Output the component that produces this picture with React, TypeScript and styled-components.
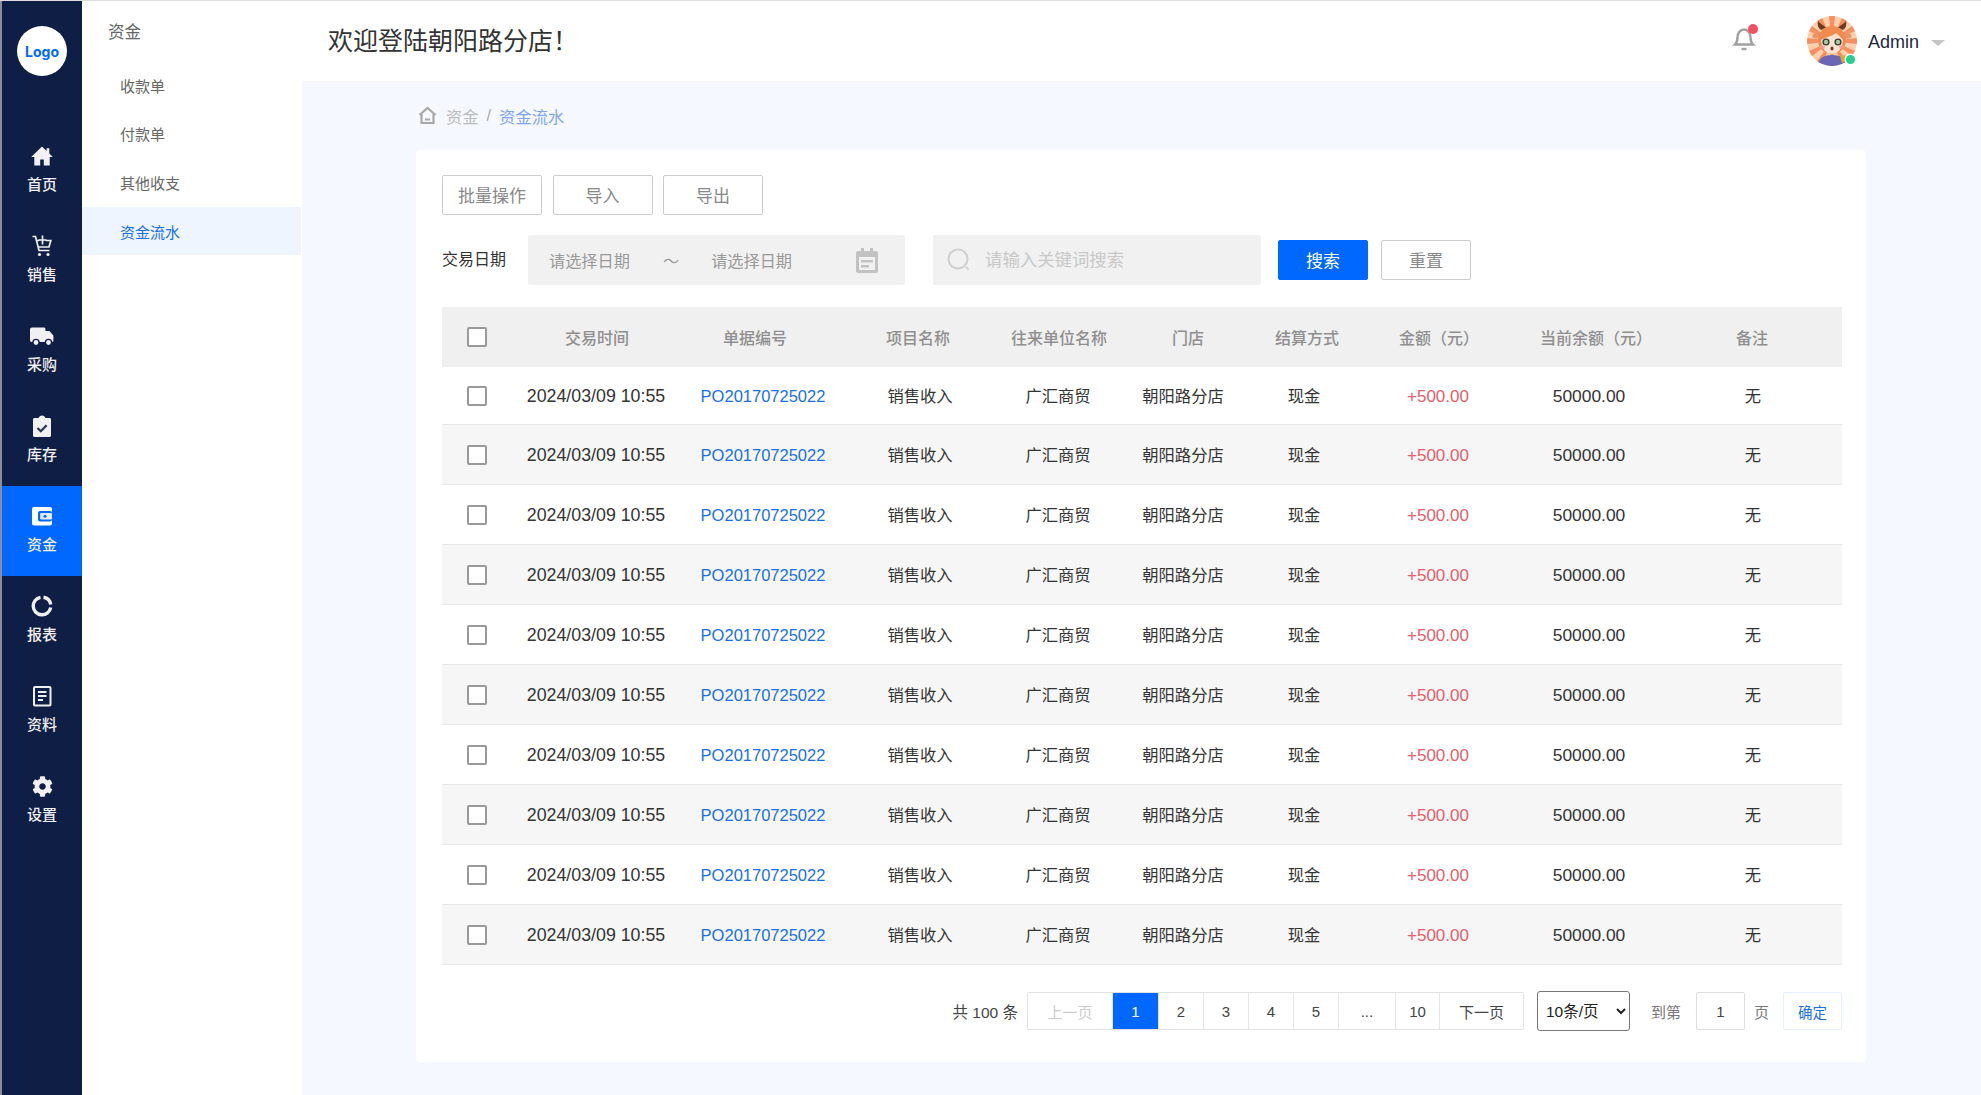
import React from 'react';
import styled, { createGlobalStyle } from 'styled-components';
import { FaCog } from 'react-icons/fa';

const FONT = '"Liberation Sans", "Noto Sans CJK SC", sans-serif';
const HEAD_COLS = '70px 170px 146px 180px 102px 156px 82px 182px 132px 180px';
const BODY_COLS = '70px 168px 166px 148px 128px 122px 120px 148px 154px 174px';

const GlobalStyle = createGlobalStyle`
  html, body {
    margin: 0;
    padding: 0;
    background: #f6f8ff;
    font-family: ${FONT};
  }
  * {
    box-sizing: border-box;
  }
`;

const Shell = styled.div`
  display: grid;
  grid-template-columns: 82px 220px 1fr;
  width: 1981px;
  height: 1095px;
  overflow: hidden;
  border-top: 1px solid #dedede;
`;

const Rail = styled.nav`
  display: flex;
  flex-direction: column;
  background: #0f1e45;
  border-left: 2px solid #8b8f9b;
`;

const LogoWrap = styled.div`
  display: flex;
  justify-content: center;
  height: 125px;
  padding-top: 25px;
`;

const Logo = styled.div`
  display: flex;
  align-items: center;
  justify-content: center;
  width: 50px;
  height: 50px;
  border-radius: 50%;
  background: #fff;
  color: #0068ff;
  font-family: Inter, sans-serif;
  font-size: 14px;
  font-weight: 700;
`;

const RailItem = styled.a<{ $active?: boolean }>`
  display: flex;
  flex-direction: column;
  align-items: center;
  height: 90px;
  padding-top: 18px;
  gap: 6px;
  background: ${(p) => (p.$active ? '#0068ff' : 'transparent')};
  color: #f0f0f0;
  font-size: 15px;
  font-weight: 500;
  line-height: 22px;
`;

const RailIcon = styled.svg`
  display: block;
  width: 24px;
  height: 24px;
`;

const SubNav = styled.aside`
  display: flex;
  flex-direction: column;
  background: #fff;
`;

const SubTitle = styled.div`
  height: 60px;
  padding: 20px 0 0 26px;
  color: #666;
  font-size: 16.5px;
  line-height: 22px;
`;

const SubItem = styled.a<{ $active?: boolean }>`
  display: flex;
  align-items: center;
  height: 48.6px;
  padding-left: 38px;
  margin-right: 1px;
  background: ${(p) => (p.$active ? '#eef5ff' : 'transparent')};
  color: ${(p) => (p.$active ? '#1a6fe8' : '#666')};
  font-size: 15px;
`;

const Main = styled.main`
  display: flex;
  flex-direction: column;
  min-width: 0;
`;

const TopBar = styled.header`
  display: flex;
  align-items: center;
  height: 80px;
  padding-left: 26px;
  background: #fff;
`;

const Welcome = styled.h1`
  flex: 1;
  margin: 0 0 4px;
  color: #333;
  font-size: 25px;
  font-weight: 400;
`;

const Bell = styled.div`
  position: relative;
  width: 24px;
  height: 26px;
  margin-right: 51px;
  margin-bottom: 6px;
`;

const BellDot = styled.span`
  position: absolute;
  top: -1px;
  right: -2px;
  width: 10px;
  height: 10px;
  border-radius: 50%;
  background: #f4505f;
`;

const AvatarWrap = styled.div`
  position: relative;
  width: 50px;
  height: 50px;
  margin-right: 11px;
`;

const StatusDot = styled.span`
  position: absolute;
  right: 2px;
  bottom: 2px;
  width: 9px;
  height: 9px;
  border-radius: 50%;
  background: #22cf8b;
  box-shadow: 0 0 0 1.5px #fff;
`;

const UserName = styled.span`
  margin-top: 2px;
  color: #1d2740;
  font-size: 18px;
`;

const Caret = styled.span`
  width: 0;
  height: 0;
  margin: 3px 36px 0 12px;
  border-left: 7px solid transparent;
  border-right: 7px solid transparent;
  border-top: 6px solid #c4c4c4;
`;

const Content = styled.div`
  display: flex;
  flex-direction: column;
  padding: 0 115px 0 114px;
`;

const Crumbs = styled.div`
  display: flex;
  align-items: center;
  height: 69px;
  padding-left: 2px;
  color: #bbb;
  font-size: 16.3px;
`;

const CrumbHome = styled.svg`
  width: 19px;
  height: 19px;
  margin-right: 9px;
`;

const CrumbSep = styled.span`
  margin: 0 8px;
  color: #aaa;
`;

const CrumbCurrent = styled.span`
  color: #7ea6ee;
`;

const Card = styled.section`
  height: 912px;
  padding: 25px 24px 0 26px;
  background: #fff;
  border-radius: 4px;
`;

const Toolbar = styled.div`
  display: flex;
  gap: 10.5px;
  margin-bottom: 20px;
`;

const Button = styled.button<{ $primary?: boolean; $w?: number }>`
  width: ${(p) => p.$w ?? 100}px;
  height: 40px;
  padding: 0 0 2px;
  border: 1px solid ${(p) => (p.$primary ? '#0068ff' : '#ccc')};
  border-radius: 2px;
  background: ${(p) => (p.$primary ? '#0068ff' : '#fff')};
  color: ${(p) => (p.$primary ? '#fff' : '#888')};
  font-family: ${FONT};
  font-size: 17px;
`;

const FilterRow = styled.div`
  display: flex;
  align-items: center;
  height: 50px;
  margin-bottom: 22px;
`;

const FilterLabel = styled.label`
  width: 86px;
  margin-bottom: 4px;
  color: #333;
  font-size: 16px;
`;

const DateRange = styled.div`
  display: flex;
  align-items: center;
  width: 377px;
  height: 50px;
  padding: 0 27px 0 21px;
  background: #f1f1f1;
  border-radius: 2px;
  color: #999;
  font-size: 16.2px;
`;

const Tilde = styled.span`
  margin: 0 32px 0 33px;
`;

const DateText = styled.span`
  flex: none;
  padding-bottom: 1px;
`;

const CalendarIcon = styled.svg`
  width: 22px;
  height: 25px;
  margin-left: auto;
`;

const SearchBox = styled.div`
  display: flex;
  align-items: center;
  width: 328px;
  height: 50px;
  margin-left: 28px;
  margin-right: 17px;
  padding-left: 14px;
  background: #f1f1f1;
  border-radius: 2px;
  color: #c8c8c8;
  font-size: 17.4px;
`;

const SearchIcon = styled.svg`
  width: 24px;
  height: 24px;
  margin-right: 14px;
`;

const Placeholder = styled.span`
  padding-bottom: 3px;
`;

const ResetButton = styled(Button)`
  margin-left: 13px;
`;

const HeadRow = styled.div`
  display: grid;
  grid-template-columns: ${HEAD_COLS};
  align-items: center;
  height: 60px;
  background: #f0f0f0;
  color: #8f8f8f;
  font-size: 16px;
  font-weight: 500;
  text-align: center;
`;

const Row = styled.div<{ $striped: boolean; $first: boolean }>`
  display: grid;
  grid-template-columns: ${BODY_COLS};
  align-items: center;
  height: ${(p) => (p.$first ? 58 : 60)}px;
  background: ${(p) => (p.$striped ? '#f6f6f6' : '#fff')};
  border-bottom: 1px solid #e8e8e8;
  color: #333;
  font-size: 16.3px;
  text-align: center;
`;

const Cell = styled.span`
  padding-bottom: 2px;
`;

const NumberCell = styled.span`
  padding-top: 2px;
`;

const Check = styled.input`
  appearance: none;
  display: block;
  width: 20px;
  height: 20px;
  margin: 0 auto;
  border: 2.5px solid #999;
  border-radius: 2px;
  background: #fff;
`;

const DateCell = styled(NumberCell)`
  font-size: 17.8px;
`;

const OrderLink = styled(NumberCell)`
  color: #1a6fe8;
  font-size: 16.5px;
`;

const Amount = styled(NumberCell)`
  color: #e4606a;
  font-size: 17px;
`;

const Balance = styled(NumberCell)`
  font-size: 17.4px;
`;

const Pager = styled.div`
  display: flex;
  align-items: center;
  justify-content: flex-end;
  height: 40px;
  margin-top: 26px;
  color: #555;
  font-size: 15px;
`;

const Total = styled.span`
  margin-right: 9px;
  color: #444;
  font-size: 15.5px;
`;

const PageGroup = styled.div`
  display: flex;
  height: 38px;
  border: 1px solid #e2e2e2;
  border-radius: 2px;
`;

const PageItem = styled.a<{ $w: number; $active?: boolean; $disabled?: boolean }>`
  display: flex;
  align-items: center;
  justify-content: center;
  width: ${(p) => p.$w}px;
  background: ${(p) => (p.$active ? '#0068ff' : '#fff')};
  color: ${(p) => (p.$active ? '#fff' : p.$disabled ? '#ccc' : '#444')};
  font-size: 15px;
  & + & {
    border-left: 1px solid #e6e6e6;
  }
`;

const SizeSelect = styled.select`
  width: 93px;
  height: 40px;
  margin-left: 13px;
  padding-left: 4px;
  border: 1px solid #767676;
  border-radius: 3px;
  background: #fff;
  color: #222;
  font-family: ${FONT};
  font-size: 15.5px;
`;

const JumpLabel = styled.span`
  margin: 0 15px 0 21px;
  color: #777;
`;

const JumpInput = styled.div`
  display: flex;
  align-items: center;
  justify-content: center;
  width: 49px;
  height: 38px;
  border: 1px solid #ddd;
  border-radius: 2px;
  color: #444;
`;

const JumpSuffix = styled.span`
  margin: 0 14px 0 9px;
  color: #777;
`;

const ConfirmButton = styled.a`
  display: flex;
  align-items: center;
  justify-content: center;
  width: 59px;
  height: 38px;
  border: 1px solid #e6f0ff;
  border-radius: 2px;
  color: #1a6fe8;
  font-size: 14.5px;
`;

const railItems: { label: string; icon: React.ReactNode }[] = [
  {
    label: '首页',
    icon: (
      <RailIcon viewBox="0 0 24 24" fill="#f0f0f0">
        <path d="M12 2.5 1.2 13h3.1v8.5h5.9v-6h3.6v6h5.9V13h3.1l-3.5-3.4V4.2h-2.7v2.8z" />
      </RailIcon>
    ),
  },
  {
    label: '销售',
    icon: (
      <RailIcon viewBox="0 0 24 24" fill="none" stroke="#f0f0f0" strokeWidth="1.7">
        <path d="M2.5 2.500h3l3.500 14h10.500" />
        <path d="M6.500 6.500h2.800M15.500 6.500h5.300l-1.800 6.500H8.200" />
        <path d="M12.500 1.500v9M8.500 6h8" />
        <circle cx="9.500" cy="20.500" r="1.600" fill="#f0f0f0" stroke="none" />
        <circle cx="18" cy="20.500" r="1.600" fill="#f0f0f0" stroke="none" />
      </RailIcon>
    ),
  },
  {
    label: '采购',
    icon: (
      <RailIcon viewBox="0 0 24 24" fill="#f0f0f0">
        <path d="M0 5.500C0 4.400.9 3.500 2 3.500h12c.8 0 1.400.6 1.400 1.400V7h4l4 4.600v5.200c0 .7-.5 1.200-1.200 1.200H1.800C.8 18 0 17.200 0 16.200z" />
        <circle cx="6" cy="18.500" r="3.100" stroke="#0f1e45" strokeWidth="1.400" />
        <circle cx="18.500" cy="18.500" r="3.100" stroke="#0f1e45" strokeWidth="1.400" />
      </RailIcon>
    ),
  },
  {
    label: '库存',
    icon: (
      <RailIcon viewBox="0 0 24 24">
        <path
          fill="#f0f0f0"
          d="M4.500 4H8.600c.4-1.500 1.800-2.600 3.400-2.600s3 1.100 3.400 2.600h4.100c.8 0 1.500.7 1.500 1.500v16c0 .8-.7 1.500-1.500 1.500h-15C3.700 23 3 22.300 3 21.500v-16C3 4.700 3.700 4 4.500 4z"
        />
        <path d="m7.500 14 3.300 3.200 5.800-6" fill="none" stroke="#2a3350" strokeWidth="2.200" />
      </RailIcon>
    ),
  },
  {
    label: '资金',
    icon: (
      <RailIcon viewBox="0 0 24 24">
        <rect x="2" y="3" width="20" height="18.500" rx="2" fill="#fff" />
        <rect x="8" y="7" width="14" height="10.500" rx="2" fill="#0068ff" />
        <rect x="10.200" y="9" width="11.800" height="6.500" rx="1" fill="#dfeaff" />
        <circle cx="15" cy="12.300" r="1.500" fill="#0068ff" />
      </RailIcon>
    ),
  },
  {
    label: '报表',
    icon: (
      <RailIcon viewBox="0 0 24 24" fill="none" stroke="#f0f0f0" strokeWidth="3.400">
        <path d="M13.500 3.300a8.800 8.800 0 0 1 7.200 7.200" />
        <path d="M20.700 13.500A8.800 8.800 0 1 1 10.500 3.300" />
      </RailIcon>
    ),
  },
  {
    label: '资料',
    icon: (
      <RailIcon viewBox="0 0 24 24" fill="none" stroke="#f0f0f0">
        <rect x="4" y="3" width="16.500" height="18.500" rx="1" strokeWidth="2" />
        <path d="M8 8h8.500M8 12h8.500M8 16h5" strokeWidth="2" />
      </RailIcon>
    ),
  },
  {
    label: '设置',
    icon: <FaCog size={21} color="#f0f0f0" style={{ margin: '2px 0 1px' }} />,
  },
];

const subItems = ['收款单', '付款单', '其他收支', '资金流水'];
const headers = ['交易时间', '单据编号', '项目名称', '往来单位名称', '门店', '结算方式', '金额（元）', '当前余额（元）', '备注'];
const pages = ['2', '3', '4', '5'];

const Avatar = () => (
  <svg width="50" height="50" viewBox="0 0 50 50">
    <defs>
      <clipPath id="avatar-clip">
        <circle cx="25" cy="25" r="25" />
      </clipPath>
    </defs>
    <g clipPath="url(#avatar-clip)">
      <rect width="50" height="50" fill="#fcd0ad" />
      {Array.from({ length: 12 }, (_, i) => (
        <path key={i} d="M25 25 L21 -8 L29 -8 Z" transform={`rotate(${i * 30} 25 25)`} fill="#f68e5f" />
      ))}
      <path d="M10 52c1-10 7-13 15-13s14 3 15 13z" fill="#6a67b5" />
      <path d="M33 40l6-1 1 5-5 3z" fill="#d9ad2c" />
      <path d="M14 14c-3-2-4-5-3-9 2 3 6 4 8 7zM36 14c3-2 4-5 3-9-2 3-6 4-8 7z" fill="#6e3a20" />
      <ellipse cx="9.500" cy="20" rx="4" ry="2.500" fill="#e89467" />
      <ellipse cx="40.500" cy="20" rx="4" ry="2.500" fill="#e89467" />
      <circle cx="25" cy="24" r="14" fill="#f08b50" />
      <path d="M14 24c1 10 6 14 11 14s10-4 11-14c-3-3-6-7-7-7-3 3-10 4-15 7z" fill="#fde3cf" />
      <circle cx="19" cy="26" r="3.600" fill="#3b3c3a" />
      <circle cx="19" cy="26" r="2.200" fill="#a5c9a0" />
      <circle cx="31" cy="26" r="3.600" fill="#3b3c3a" />
      <circle cx="31" cy="26" r="2.200" fill="#a5c9a0" />
      <ellipse cx="15.500" cy="31" rx="2.300" ry="1.500" fill="#f39a9a" />
      <ellipse cx="34.500" cy="31" rx="2.300" ry="1.500" fill="#f39a9a" />
      <ellipse cx="25" cy="32.500" rx="1.500" ry="2" fill="#7a2f2f" />
    </g>
  </svg>
);

const App: React.FC = () => {
  const rows = Array.from({ length: 10 }, (_, i) => i);

  return (
    <>
      <GlobalStyle />
      <Shell>
        <Rail>
          <LogoWrap>
            <Logo>Logo</Logo>
          </LogoWrap>
          {railItems.map((item) => (
            <RailItem key={item.label} $active={item.label === '资金'}>
              {item.icon}
              {item.label}
            </RailItem>
          ))}
        </Rail>
        <SubNav>
          <SubTitle>资金</SubTitle>
          {subItems.map((item) => (
            <SubItem key={item} $active={item === '资金流水'}>
              {item}
            </SubItem>
          ))}
        </SubNav>
        <Main>
          <TopBar>
            <Welcome>欢迎登陆朝阳路分店！</Welcome>
            <Bell>
              <svg width="24" height="26" viewBox="0 0 24 26" fill="none" stroke="#a0a0a0" strokeWidth="2.400">
                <path d="M3 19.500c2-2 2.500-3.500 2.500-7 0-4.500 2.800-8 6.500-8s6.500 3.500 6.500 8c0 3.500.5 5 2.500 7z" />
                <path d="M9.500 24h5" />
              </svg>
              <BellDot />
            </Bell>
            <AvatarWrap>
              <Avatar />
              <StatusDot />
            </AvatarWrap>
            <UserName>Admin</UserName>
            <Caret />
          </TopBar>
          <Content>
            <Crumbs>
              <CrumbHome viewBox="0 0 18 19" fill="none" stroke="#a8a8a8" strokeWidth="2.200">
                <path d="M1 9 9 2l8 7M3 7.500V17h12V7.500M6.500 13.500h5" />
              </CrumbHome>
              资金
              <CrumbSep>/</CrumbSep>
              <CrumbCurrent>资金流水</CrumbCurrent>
            </Crumbs>
            <Card>
              <Toolbar>
                <Button>批量操作</Button>
                <Button>导入</Button>
                <Button>导出</Button>
              </Toolbar>
              <FilterRow>
                <FilterLabel>交易日期</FilterLabel>
                <DateRange>
                  <DateText>请选择日期</DateText>
                  <Tilde>～</Tilde>
                  <DateText>请选择日期</DateText>
                  <CalendarIcon viewBox="0 0 22 25">
                    <path
                      fill="#c2c2c2"
                      d="M5 0h3v3h6V0h3v3h3c1 0 2 1 2 2v18c0 1-1 2-2 2H2c-1 0-2-1-2-2V5c0-1 1-2 2-2h3zM3 9v13h16V9z"
                    />
                    <path fill="#c2c2c2" d="M5 12h12v2.500H5zM5 17h8v2.500H5z" />
                  </CalendarIcon>
                </DateRange>
                <SearchBox>
                  <SearchIcon viewBox="0 0 24 24" fill="none" stroke="#cfcfcf" strokeWidth="2">
                    <circle cx="11" cy="11" r="9.500" />
                    <path d="m19 19 2.500 2.500" />
                  </SearchIcon>
                  <Placeholder>请输入关键词搜索</Placeholder>
                </SearchBox>
                <Button $primary $w={90}>
                  搜索
                </Button>
                <ResetButton $w={90}>重置</ResetButton>
              </FilterRow>
              <HeadRow>
                <Check type="checkbox" />
                {headers.map((h) => (
                  <span key={h}>{h}</span>
                ))}
              </HeadRow>
              {rows.map((i) => (
                <Row key={i} $striped={i % 2 === 1} $first={i === 0}>
                  <Check type="checkbox" />
                  <DateCell>2024/03/09 10:55</DateCell>
                  <OrderLink>PO20170725022</OrderLink>
                  <Cell>销售收入</Cell>
                  <Cell>广汇商贸</Cell>
                  <Cell>朝阳路分店</Cell>
                  <Cell>现金</Cell>
                  <Amount>+500.00</Amount>
                  <Balance>50000.00</Balance>
                  <Cell>无</Cell>
                </Row>
              ))}
              <Pager>
                <Total>共 100 条</Total>
                <PageGroup>
                  <PageItem $w={84} $disabled>
                    上一页
                  </PageItem>
                  <PageItem $w={46} $active>
                    1
                  </PageItem>
                  {pages.map((p) => (
                    <PageItem key={p} $w={45}>
                      {p}
                    </PageItem>
                  ))}
                  <PageItem $w={57}>...</PageItem>
                  <PageItem $w={44}>10</PageItem>
                  <PageItem $w={84}>下一页</PageItem>
                </PageGroup>
                <SizeSelect defaultValue="10">
                  <option value="10">10条/页</option>
                  <option value="20">20条/页</option>
                </SizeSelect>
                <JumpLabel>到第</JumpLabel>
                <JumpInput>1</JumpInput>
                <JumpSuffix>页</JumpSuffix>
                <ConfirmButton>确定</ConfirmButton>
              </Pager>
            </Card>
          </Content>
        </Main>
      </Shell>
    </>
  );
};

export default App;
